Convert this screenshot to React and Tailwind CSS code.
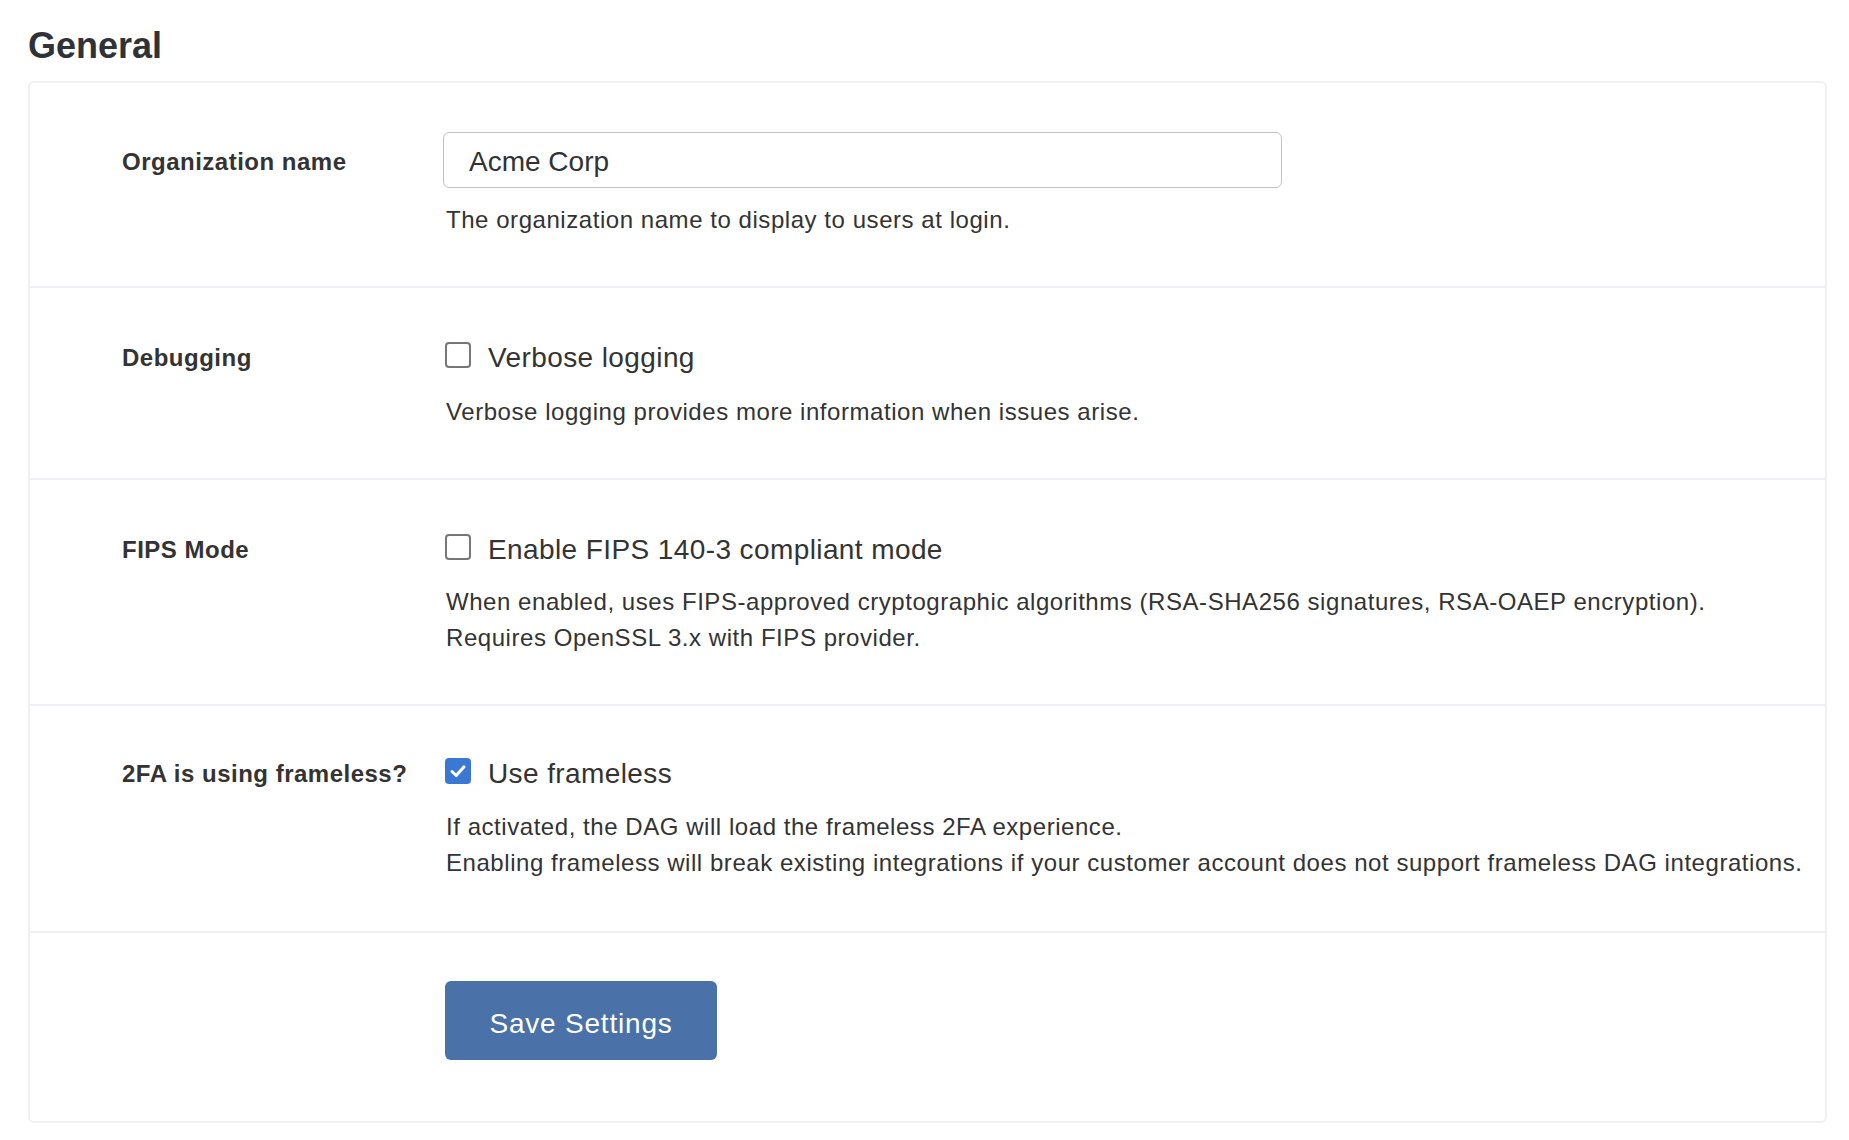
import React from "react";

const font = { fontFamily: '"Liberation Sans", Arial, Helvetica, sans-serif' };

function Check({ checked }) {
  if (checked) {
    return (
      <span className="mb-[5px] ml-[2px] flex h-[26px] w-[26px] shrink-0 items-center justify-center rounded-[4px] bg-[#3a78d4]">
        <svg viewBox="0 0 16 16" className="h-[20px] w-[20px]" fill="none">
          <path d="M3.2 8.4 L6.6 11.6 L12.8 4.6" stroke="#ffffff" strokeWidth="2.4" strokeLinecap="round" strokeLinejoin="round" />
        </svg>
      </span>
    );
  }
  return (
    <span className="mb-[5px] ml-[2px] h-[26px] w-[26px] shrink-0 rounded-[4px] border-2 border-[#777777] bg-white" />
  );
}

function Label({ children, className = "" }) {
  return (
    <div className={"text-[24px] font-bold tracking-[0.5px] text-[#333333] " + className}>{children}</div>
  );
}

function Help({ children }) {
  return <div className="pl-[3px] text-[24px] leading-[36.5px] tracking-[0.55px] text-[#333333]">{children}</div>;
}

function CheckRow({ label, text, checked, help, rowClass, helpClass }) {
  return (
    <div className={"grid grid-cols-[321px_1fr] border-t-2 border-[#eef0f5] pl-[92px] " + rowClass}>
      <Label className="leading-[36px]">{label}</Label>
      <div>
        <div className="flex h-[36px] items-center gap-[17px]">
          <Check checked={checked} />
          <span className="text-[28px] tracking-[0.4px] text-[#333333]">{text}</span>
        </div>
        <div className={helpClass}>
          {help.map((h, i) => (
            <Help key={i}>{h}</Help>
          ))}
        </div>
      </div>
    </div>
  );
}

export default function App() {
  return (
    <div className="min-h-[1140px] bg-white pl-[28px] pr-[22px]" style={font}>
      <h3 className="pt-[26px] pb-[15px] text-[36px] font-bold leading-[40px] text-[#2f3337]">General</h3>
      <div className="rounded-[6px] border-2 border-[#eef0f5] bg-white">
        <div className="grid grid-cols-[321px_1fr] pl-[92px] pt-[49px] pb-[47px]">
          <Label className="pt-[2px] leading-[56px]">Organization name</Label>
          <div>
            <div className="flex h-[56px] w-[839px] items-center rounded-[6px] border-[1.5px] border-[#c2c2c2] pl-[25px] pt-[3px] text-[28px] text-[#2f3337]">
              Acme Corp
            </div>
            <div className="mt-[14px]">
              <Help>The organization name to display to users at login.</Help>
            </div>
          </div>
        </div>
        <CheckRow
          label="Debugging"
          text="Verbose logging"
          checked={false}
          rowClass="pt-[52px] pb-[47.5px]"
          helpClass="mt-[18px]"
          help={["Verbose logging provides more information when issues arise."]}
        />
        <CheckRow
          label="FIPS Mode"
          text="Enable FIPS 140-3 compliant mode"
          checked={false}
          rowClass="pt-[52px] pb-[47px]"
          helpClass="mt-[16px]"
          help={[
            "When enabled, uses FIPS-approved cryptographic algorithms (RSA-SHA256 signatures, RSA-OAEP encryption).",
            "Requires OpenSSL 3.x with FIPS provider.",
          ]}
        />
        <CheckRow
          label="2FA is using frameless?"
          text="Use frameless"
          checked={true}
          rowClass="pt-[50px] pb-[49.5px]"
          helpClass="mt-[17px]"
          help={[
            "If activated, the DAG will load the frameless 2FA experience.",
            "Enabling frameless will break existing integrations if your customer account does not support frameless DAG integrations.",
          ]}
        />
        <div className="grid grid-cols-[321px_1fr] border-t-2 border-[#eef0f5] pl-[92px] pt-[48px] pb-[61px]">
          <div />
          <div>
            <button className="ml-[2px] flex h-[79px] w-[272px] items-center justify-center rounded-[6px] bg-[#4a72a8] pt-[6px] text-[28px] tracking-[0.8px] text-white">
              Save Settings
            </button>
          </div>
        </div>
      </div>
    </div>
  );
}
